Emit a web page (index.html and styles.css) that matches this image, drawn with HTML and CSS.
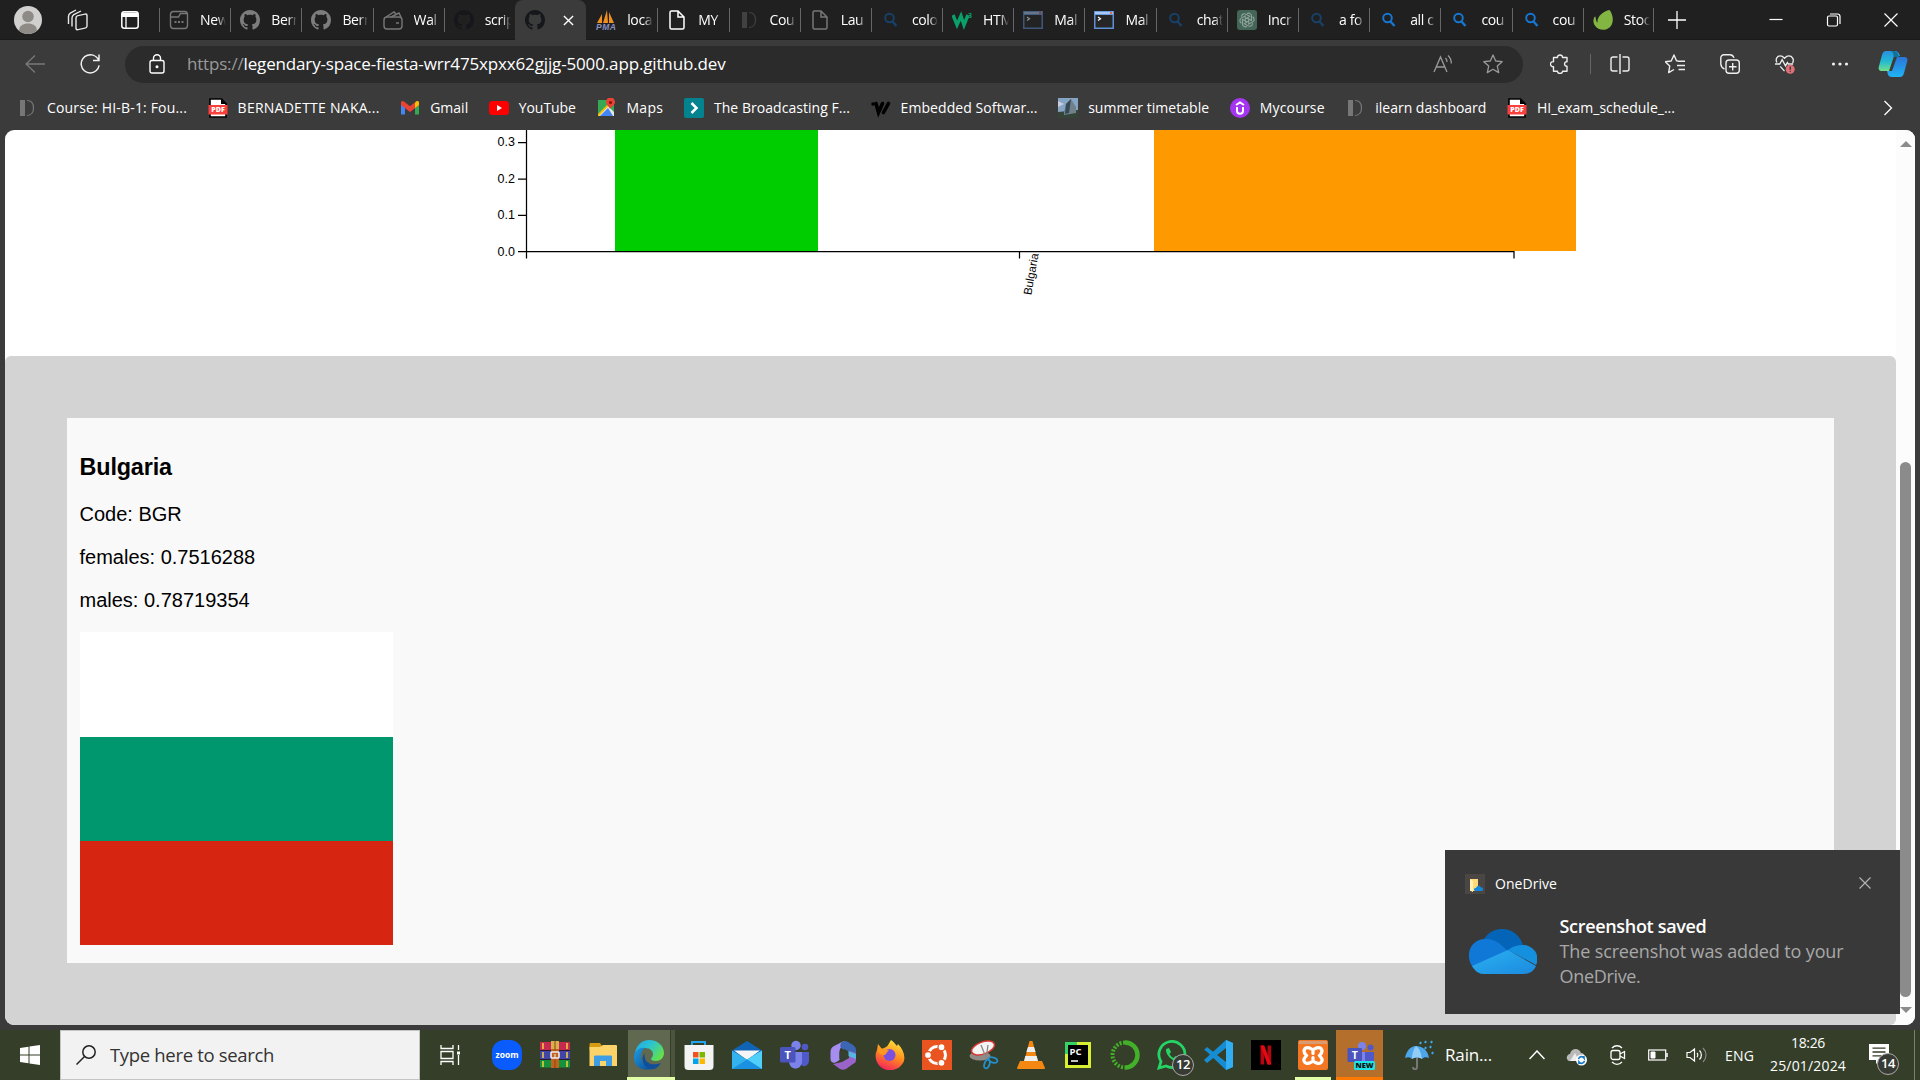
FILE: index.html
```html
<!DOCTYPE html>
<html lang="en">
<head>
<meta charset="utf-8">
<title>Desktop</title>
<link rel="stylesheet" href="styles.css">
</head>
<body>
<svg class="defs" aria-hidden="true">
  <defs>
    <linearGradient id="edgeA" x1="0" y1="0" x2="1" y2=".6"><stop offset="0" stop-color="#1fa5e8"/><stop offset=".5" stop-color="#2bc4d0"/><stop offset="1" stop-color="#63e04b"/></linearGradient>
    <linearGradient id="edgeB" x1="0" y1="0" x2="1" y2="1"><stop offset="0" stop-color="#1b9de2"/><stop offset="1" stop-color="#0c4a95"/></linearGradient>
    <linearGradient id="copA" x1="0" y1="0" x2="0" y2="1"><stop offset="0" stop-color="#2a8fe0"/><stop offset=".5" stop-color="#21b8d4"/><stop offset="1" stop-color="#72e08a"/></linearGradient>
    <linearGradient id="copB" x1="0" y1="0" x2="0" y2="1"><stop offset="0" stop-color="#2b74d8"/><stop offset="1" stop-color="#20b4f5"/></linearGradient>
    <linearGradient id="fire" x1=".7" y1="0" x2=".3" y2="1"><stop offset="0" stop-color="#ffe83a"/><stop offset=".5" stop-color="#ff8a1e"/><stop offset="1" stop-color="#f5205e"/></linearGradient>
    <linearGradient id="odFront" x1="0" y1="0" x2="1" y2="1"><stop offset="0" stop-color="#2bb1f0"/><stop offset="1" stop-color="#1b8ae0"/></linearGradient>
  </defs>
  <symbol id="github" viewBox="0 0 16 16"><path d="M8 0C3.58 0 0 3.58 0 8c0 3.54 2.29 6.53 5.47 7.59.4.07.55-.17.55-.38 0-.19-.01-.82-.01-1.49-2.01.37-2.53-.49-2.69-.94-.09-.23-.48-.94-.82-1.13-.28-.15-.68-.52-.01-.53.63-.01 1.08.58 1.23.82.72 1.21 1.87.87 2.33.66.07-.52.28-.87.51-1.07-1.78-.2-3.64-.89-3.64-3.95 0-.87.31-1.59.82-2.15-.08-.2-.36-1.02.08-2.12 0 0 .67-.21 2.2.82.64-.18 1.32-.27 2-.27.68 0 1.36.09 2 .27 1.53-1.04 2.2-.82 2.2-.82.44 1.1.16 1.92.08 2.12.51.56.82 1.27.82 2.15 0 3.07-1.87 3.75-3.65 3.95.29.25.54.73.54 1.48 0 1.07-.01 1.93-.01 2.2 0 .21.15.46.55.38A8.013 8.013 0 0016 8c0-4.42-3.58-8-8-8z" fill="currentColor"/></symbol>
  <symbol id="find" viewBox="0 0 20 20"><circle cx="8.5" cy="8" r="4.3" fill="none" stroke="currentColor" stroke-width="2"/><path d="M11.5 11.5l4 4.5" stroke="currentColor" stroke-width="2.4"/></symbol>
  <symbol id="page" viewBox="0 0 20 20"><path d="M3 2.5C3 1.500 3.500 1 4.500 1H11l6 6v10.500c0 1-.5 1.500-1.500 1.500h-11C3.500 19 3 18.500 3 17.500zM11 1v6h6" fill="none" stroke="currentColor" stroke-width="1.500"/></symbol>
  <symbol id="ilearn" viewBox="0 0 20 20"><path d="M3 2h5v16H3z" fill="currentColor"/><path d="M10 2.500c4.500 0 6.500 3.500 6.500 7.500s-2 7.500-6.500 7.500" fill="none" stroke="currentColor" stroke-width="1.200"/></symbol>
  <symbol id="term" viewBox="0 0 20 20"><path d="M0 1h20v18H0z" fill="#5f8fd8"/><path d="M1.500 5h17v12.500h-17z" fill="#262626"/><path d="M1 1.800h18v2.400H1z" fill="#a9c9f5"/><path d="M16 2.200h2.200v1.600H16z" fill="#e8532e"/><path d="M4 7l2.500 1.800L4 10.500" fill="none" stroke="#fff" stroke-width="1.200"/></symbol>
  <symbol id="pdf" viewBox="0 0 20 20"><path d="M2 1h11.500L18 5.500V19H2z" fill="#fff" stroke="#000" stroke-width="1.600"/><path d="M13 1v5h5z"/><path d="M.5 7h19v9.500H.5z" fill="#f9403c"/><text x="10" y="14.300" text-anchor="middle" font-family="Open Sans" font-weight="800" font-size="7" fill="#fff">PDF</text></symbol>
</svg>

<header class="tabstrip">
  <div class="tab-tools">
    <svg class="avatar" viewBox="0 0 28 28"><circle cx="14" cy="14" r="14" fill="#d2d0ce"/><circle cx="14" cy="10.500" r="5.800" fill="#8e8b87"/><path d="M5 24.500c.5-5 4-7 9-7s8.500 2 9 7c-5 4.500-13 4.500-18 0z" fill="#8e8b87"/></svg>
    <svg class="i22" viewBox="0 0 22 22" fill="none" stroke="#e8e8e8" stroke-width="1.400"><path d="M1.500 15V7.500c0-1.500.5-2.500 1.800-3.300L9 1M5 17.500V9c0-1.500.5-2.500 1.800-3.300L14 2"/><rect x="9" y="6" width="11" height="14" rx="2" transform="skewY(-12) translate(0 3)"/></svg>
    <svg class="i18" viewBox="0 0 18 18"><rect x=".8" y=".8" width="16.400" height="16.400" rx="2.500" fill="none" stroke="#fff" stroke-width="1.500"/><path d="M1 1.500h16V6H1z" fill="#fff"/><path d="M5 5v12" stroke="#fff" stroke-width="1.300"/></svg>
  </div>
  <nav class="tabs">
    <div class="tab"><svg viewBox="0 0 20 20" fill="none" stroke="#777" stroke-width="1.400"><rect x="1.500" y="1.500" width="17" height="17" rx="3"/><path d="M1.500 7h8l2-3.500h7" /><path d="M5.500 12h2m1.500 0h2m1.500 0h2" stroke-width="2"/></svg><span>New</span></div>
    <div class="tab gh"><svg><use href="#github"/></svg><span>Bern</span></div>
    <div class="tab gh"><svg><use href="#github"/></svg><span>Bern</span></div>
    <div class="tab"><svg viewBox="0 0 20 20" fill="none" stroke="#777" stroke-width="1.400"><rect x="1" y="7" width="18" height="12" rx="3"/><path d="M3 7l8-5 2 2M8 7l8-4 2 4M13 13h3"/></svg><span>Wal</span></div>
    <div class="tab gh-dark"><svg><use href="#github"/></svg><span>scrip</span></div>
    <div class="tab active gh-dark"><svg><use href="#github"/></svg><svg class="close" viewBox="0 0 12 12"><path d="M1 1l10 10M11 1L1 11" stroke="#fff" stroke-width="1.500"/></svg></div>
    <div class="tab"><svg viewBox="0 0 20 20"><path d="M1 13L6 4v9zM7 13l4-13 1 13zM13 13V2l5 11z" fill="#f09020"/><text x="0" y="19.500" font-family="Liberation Sans" font-weight="700" font-style="italic" font-size="8.500" textLength="20" fill="#8a90c0">PMA</text></svg><span>loca</span></div>
    <div class="tab pg-on"><svg><use href="#page"/></svg><span>MY</span></div>
    <div class="tab il"><svg><use href="#ilearn"/></svg><span>Cou</span></div>
    <div class="tab pg"><svg><use href="#page"/></svg><span>Lau</span></div>
    <div class="tab sr-dim"><svg><use href="#find"/></svg><span>colo</span></div>
    <div class="tab"><svg viewBox="0 0 20 20"><path d="M1 5l4 10 4-9 3 9 4-10" fill="none" stroke="#0aa06a" stroke-width="3.400"/><text x="16" y="8" font-family="Open Sans" font-weight="700" font-size="7" fill="#0aa06a">3</text></svg><span>HTM</span></div>
    <div class="tab dim"><svg><use href="#term"/></svg><span>Mal</span></div>
    <div class="tab"><svg><use href="#term"/></svg><span>Mal</span></div>
    <div class="tab sr-dim"><svg><use href="#find"/></svg><span>chat</span></div>
    <div class="tab"><svg viewBox="0 0 20 20"><rect width="20" height="20" rx="3" fill="#446659"/><g fill="none" stroke="#92a59d" stroke-width="1.100"><path id="petal" d="M10 3.500c2.500-1 4.500.5 4.500 2.500v4.500L10 8"/><use href="#petal" transform="rotate(60 10 10)"/><use href="#petal" transform="rotate(120 10 10)"/><use href="#petal" transform="rotate(180 10 10)"/><use href="#petal" transform="rotate(240 10 10)"/><use href="#petal" transform="rotate(300 10 10)"/></g></svg><span>Incr</span></div>
    <div class="tab sr-dim"><svg><use href="#find"/></svg><span>a fo</span></div>
    <div class="tab sr"><svg><use href="#find"/></svg><span>all c</span></div>
    <div class="tab sr"><svg><use href="#find"/></svg><span>cou</span></div>
    <div class="tab sr"><svg><use href="#find"/></svg><span>cou</span></div>
    <div class="tab"><svg viewBox="0 0 20 20"><path d="M16.500 0C19 3 21 9 19 14c-2 5-8 7-13 5C1 17-1 11 1.500 7l1-.5C3 10 3 11 4.500 13 3.500 7 10 1 16.500 0z" fill="#82b541"/></svg><span>Stoc</span></div>
  </nav>
  <div class="window-tools">
    <svg viewBox="0 0 18 18"><path d="M9 0v18M0 9h18" stroke="#fff" stroke-width="1.300"/></svg>
    <svg viewBox="0 0 18 18"><path d="M2.500 8.500h13" stroke="#fff" stroke-width="1.200"/></svg>
    <svg viewBox="0 0 18 18" fill="none" stroke="#fff" stroke-width="1.200"><rect x="2.500" y="5" width="10" height="10" rx="1.500"/><path d="M5 3h7.500c1.500 0 2.500 1 2.500 2.500V13"/></svg>
    <svg viewBox="0 0 18 18"><path d="M2.500 2.500l13 13M15.500 2.500l-13 13" stroke="#fff" stroke-width="1.200"/></svg>
  </div>
</header>

<div class="toolbar">
  <svg class="back" viewBox="0 0 20 20" fill="none" stroke="#797979" stroke-width="1.300"><path d="M20 10H1M10 1.500L1 10l9 8.500"/></svg>
  <svg class="reload" viewBox="0 0 20 20" fill="none" stroke="#f0f0f0" stroke-width="1.500"><path d="M18.500 5.500C16 1.500 11.500 0 7.500 1.300a9 9 0 1 0 11.600 10M19 .5v6h-6"/></svg>
  <div class="address">
    <svg class="lock" viewBox="0 0 16 20" fill="none" stroke="#fff" stroke-width="1.400"><rect x="1" y="6.500" width="14" height="12.500" rx="2"/><path d="M4.500 6.500V4.300a3.500 3.500 0 0 1 7 0v2.200"/><circle cx="8" cy="12.700" r=".8" fill="#fff"/></svg>
    <span class="url"><span class="scheme" data-w="56.500">https://</span><span data-w="482">legendary-space-fiesta-wrr475xpxx62gjjg-5000.app.github.dev</span></span>
    <svg class="read" viewBox="0 0 20 20" fill="none" stroke="#9a9a9a" stroke-width="1.300"><path d="M1 18L7.500 3 14 18M3.500 13h8M12.500 4c1 1 1.500 2.500 1.500 4M15 1.500c2.300 2 3.300 4.500 3.300 8"/></svg>
    <svg class="star" viewBox="0 0 20 20" fill="none" stroke="#9a9a9a" stroke-width="1.300" stroke-linejoin="round"><path d="M10 1l2.700 6 6.500.7-4.900 4.400 1.400 6.500L10 15.300l-5.700 3.300 1.400-6.500L.8 7.700l6.500-.7z"/></svg>
  </div>
  <div class="actions">
    <svg viewBox="0 0 20 20" fill="none" stroke="#eee" stroke-width="1.400" stroke-linejoin="round"><path d="M3.500 3.500h4c-.5-3.300 5.500-3.300 5 0h4.500v4.300c-3-.6-3.500 4.700 0 4.400v5h-4.500c.3 3-5.300 3-5 0h-4v-4.500c-4 .3-4-5.500 0-5z"/></svg>
    <i class="sep"></i>
    <svg viewBox="0 0 20 20" fill="none" stroke="#eee" stroke-width="1.400"><path d="M7.500 3H3C1.800 3 1 3.800 1 5v10c0 1.200.8 2 2 2h4.500M12.500 3H17c1.200 0 2 .8 2 2v10c0 1.200-.8 2-2 2h-4.500M10 0v20"/></svg>
    <svg viewBox="0 0 20 20" fill="none" stroke="#eee" stroke-width="1.400" stroke-linejoin="round"><path d="M13 7l-1.500-.2L9 1 6.200 7l-6 .8 4.500 4.300-1 6.500L9 15.500M13 7.300h7M12 11.500h8M13.500 15.500H20"/></svg>
    <svg viewBox="0 0 20 20" fill="none" stroke="#eee" stroke-width="1.400"><path d="M4.500 15C2 14 1 12 .8 10V4C.8 2 2 .8 4 .8h6c2 0 3.200 1 4 3"/><rect x="6" y="6" width="13.300" height="13.300" rx="3"/><path d="M12.700 9v7.500M9 12.700h7.500"/></svg>
    <svg viewBox="0 0 21 21" fill="none" stroke="#eee" stroke-width="1.400"><path d="M10 18l-4.500-5M2 9C0 5 2.500 2 5.500 2 8 2 9.500 4 10 4.500 10.500 4 12 2 14.500 2c3.500 0 6 3.500 4 7.500M0 10.500h5L7.500 6 11 12.500l2-3.500 1 1.500h5"/><circle cx="16" cy="16" r="4.700" fill="#e07078" stroke="none"/><path d="M16 13v3.500m0 1v1.200" stroke="#333"/></svg>
    <svg viewBox="0 0 20 20" fill="#eee"><circle cx="3.500" cy="10" r="1.600"/><circle cx="10" cy="10" r="1.600"/><circle cx="16.500" cy="10" r="1.600"/></svg>
    <svg class="copilot" viewBox="0 0 30 28"><path d="M8 1h8c4 0 5 2 6 5h-6l-5 15H4c-3 0-4-2-3-5L4 5c.7-2.500 2-4 4-4z" fill="url(#copA)"/><path d="M22 27h-8c-4 0-4-3-5-6h5l5-14h7c3 0 4 2 3 5l-3 11c-.7 2.500-2 4-4 4z" fill="url(#copB)"/><path d="M15 1c4 0 5 2 6 6h-5c-1-3 0-4-3-6z" fill="#117298"/></svg>
  </div>
</div>

<nav class="bookmarks">
  <a class="il2"><svg><use href="#ilearn"/></svg><span data-w="140">Course: HI-B-1: Fou...</span></a>
  <a><svg><use href="#pdf"/></svg><span data-w="142">BERNADETTE NAKA...</span></a>
  <a><svg viewBox="0 0 20 20"><path d="M1 4v12.500h4V7.500z" fill="#4285f4"/><path d="M19 4v12.500h-4V7.500z" fill="#34a853"/><path d="M1 4.500C1 3 3 2.500 4 3.500l6 4.800 6-4.800c1-1 3-.5 3 1V7l-9 7-9-7z" fill="#ea4335"/><path d="M15 5v5l4-3V4.500c0-1.500-2-2-3-1z" fill="#fbbc04"/></svg><span data-w="38">Gmail</span></a>
  <a><svg viewBox="0 0 20 20"><rect y="3" width="20" height="14" rx="3.500" fill="red"/><path d="M8 7l5 3-5 3z" fill="#fff"/></svg><span data-w="57">YouTube</span></a>
  <a><svg viewBox="0 0 20 20"><path d="M2 2h16v16H2z" fill="#34a853"/><path d="M2 18L12 8l6 6v4z" fill="#e8e8e8"/><path d="M4 18l8-8 5 8z" fill="#4285f4"/><path d="M2 16L16 2h2L3 18H2z" fill="#fbbc04"/><path d="M14 11c-1-3-4-4-4-7a4.500 4.500 0 0 1 9 0c0 3-3 4-5 7z" fill="#ea4335"/><circle cx="14.500" cy="4.500" r="1.600" fill="#811"/></svg><span data-w="37">Maps</span></a>
  <a><svg viewBox="0 0 20 20"><rect width="20" height="20" rx="2" fill="#03838f"/><path d="M7.500 5l5 5-5 5" fill="none" stroke="#fff" stroke-width="2.500"/></svg><span data-w="136">The Broadcasting F...</span></a>
  <a><svg viewBox="0 0 20 20"><circle cx="2" cy="6" r="1.800"/><path d="M5 5.500l2.500 9L11.500 5.500M12.500 14.500L17.500 5.500" fill="none" stroke="#000" stroke-width="3.600" stroke-linecap="round"/></svg><span data-w="137">Embedded Softwar...</span></a>
  <a><svg viewBox="0 0 20 20"><path d="M0 0h20v20H0z" fill="#86a5c4"/><path d="M0 14l20-2v8H0z" fill="#354438"/><path d="M6 14l2-8 5-5 5 8v6L6 17z" fill="#70818a"/><path d="M8 6l5-5-2 14-4 1z" fill="#354856"/><path d="M0 3l6 3-6 3z" fill="#ccd"/></svg><span data-w="121">summer timetable</span></a>
  <a><svg viewBox="0 0 20 20"><circle cx="10" cy="10" r="10" fill="#a435f0"/><path d="M6 7l4-2.500L14 7M7 9v4c0 3.500 6 3.500 6 0V9" fill="none" stroke="#fff" stroke-width="2"/></svg><span data-w="65">Mycourse</span></a>
  <a class="il2"><svg><use href="#ilearn"/></svg><span data-w="111">ilearn dashboard</span></a>
  <a><svg><use href="#pdf"/></svg><span data-w="138">HI_exam_schedule_...</span></a>
  <svg class="more" viewBox="0 0 10 16"><path d="M1.500 1l7 7-7 7" fill="none" stroke="#fff" stroke-width="1.300"/></svg>
</nav>

<div class="viewport">
  <main class="content">
    <svg class="chart" width="1891" height="226" viewBox="5 130 1891 226">
      <path d="M615 130h203v121H615z" fill="#00cd00"/>
      <path d="M1154 130h422v121h-422z" fill="#ff9900"/>
      <path d="M526.500 130v128.500M518 251.500h996v7M1019.500 251.500v7M518 142.500h8M518 179h8M518 215.300h8" fill="none" stroke="#000" stroke-width="1.250"/>
      <g class="ticks" text-anchor="end"><text x="515" y="146">0.3</text><text x="515" y="182.500">0.2</text><text x="515" y="219">0.1</text><text x="515" y="255.500">0.0</text></g>
      <text class="country" text-anchor="end" transform="translate(1038.500 254) rotate(-80)">Bulgaria</text>
    </svg>
    <section class="panel">
      <article class="card">
        <h3>Bulgaria</h3>
        <p>Code: BGR</p>
        <p>females: 0.7516288</p>
        <p>males: 0.78719354</p>
        <div class="flag"><i class="white"></i><i class="green"></i><i class="red"></i></div>
      </article>
    </section>
  </main>
  <div class="scrollbar"><i class="up"></i><i class="thumb"></i><i class="down"></i></div>
</div>

<aside class="toast">
  <div class="toast-head">
    <svg viewBox="0 0 20 20"><path d="M0 0h20v20H0z" fill="#4a4644"/><path d="M5 5h8v12H5z" fill="#ffd978"/><path d="M5 5l3 2v11l-3-1.500z" fill="#fff0b8"/><path d="M10 17c-2-1.500-.5-3.500 1-3 1-3 4-3 5-.5 2-.3 3 2 1 3.500z" fill="#1287dc"/></svg>
    <span data-w="62">OneDrive</span>
    <svg class="toast-close" viewBox="0 0 12 12"><path d="M.5 .5l11 11M11.500 .5l-11 11" stroke="#b5b5b5" stroke-width="1.100"/></svg>
  </div>
  <div class="toast-body">
    <svg viewBox="0 0 69 45"><path d="M16 10C21 2 29 0 34 0c11 0 18 7 21 16L40 28z" fill="#0364b8"/><path d="M4 37C-3 26 2 10 18 10c6 0 9 2 13 4l22 20-15 11H16C11 45 7 42 4 37z" fill="#1079d8"/><path d="M40 21c5-4 10-5 15-5 9 0 18 9 13 20z" fill="#1490df"/><path d="M4 37l36-16 28 16c-2 5-7 8-12 8H16C11 45 7 42 4 37z" fill="url(#odFront)"/></svg>
    <div class="message"><b><span data-w="147">Screenshot saved</span></b><p><span data-w="284">The screenshot was added to your</span><br><span data-w="81">OneDrive.</span></p></div>
  </div>
</aside>

<footer class="taskbar">
  <div class="start"><svg viewBox="0 0 20 20" fill="#fff"><path d="M0 3l8.500-1.300v7.800H0zM9.500 1.500L20 0v9.500H9.500zM0 10.500h8.500v7.800L0 17zM9.500 10.500H20V20L9.500 18.500z"/></svg></div>
  <div class="search"><svg viewBox="0 0 20 20" fill="none" stroke="#222" stroke-width="1.500"><circle cx="13" cy="7" r="6.200"/><path d="M8.500 11.500L.5 19.500"/></svg><span data-w="164">Type here to search</span></div>
  <div class="taskview"><svg viewBox="0 0 20 20" fill="none" stroke="#fff" stroke-width="1.300"><path d="M1 0v3.500h12V0M1 20v-3.500h12V20M1 6.500h12v7H1zM18.500 0v5M18.500 10v10"/><path d="M18.500 6.500v3" stroke-width="3"/></svg></div>
  <div class="apps">
    <div><svg viewBox="0 0 30 30"><rect width="30" height="30" rx="12" fill="#0b5cff"/><text x="15" y="17.500" text-anchor="middle" font-family="Open Sans" font-weight="700" font-size="8.500" fill="#fff">zoom</text></svg></div>
    <div><svg viewBox="0 0 30 30"><rect y="2" width="30" height="8" fill="#c52a50"/><rect y="11" width="30" height="8" fill="#4245a5"/><rect y="20" width="30" height="7.500" fill="#15923c"/><path d="M0 10h30v1H0zM0 19h30v1H0z" fill="#281830"/><path d="M3 3v6M3 12v6M3 21v6M27 3v6M27 12v6M27 21v6" stroke="#f4d03b" stroke-width="1.500"/><path d="M11 1h8v27h-8z" fill="#c06420"/><path d="M11 1h8v8h-8z" fill="#d9b14a"/><path d="M15 1v10M15 19v9" stroke="#8a4514"/><rect x="11" y="12" width="8" height="6" rx="1" fill="none" stroke="#eee" stroke-width="1.600"/><path d="M15 14v4" stroke="#eee"/></svg></div>
    <div><svg viewBox="0 0 30 30"><path d="M1.500 4c0-1 1-1 1-1H12l2 3v4H1.500z" fill="#d99a13"/><path d="M1.500 7H12l3-2h13c1 0 1 1 1 1v20H1.500z" fill="#fcd368"/><path d="M6 26V17c0-1 .5-1.500 1.500-1.500h15c1 0 1.500.5 1.500 1.500v9h-6v-5h-6v5z" fill="#3d9de5"/></svg></div>
    <div class="running"><svg viewBox="0 0 30 30"><path d="M1 14C2 5 8 0 15 0c9 0 15 6 15 13 0 5-4 8-8 8-3 0-5-1-5-2s2-2 2-5-3-6-8-6c-5 0-8 2-10 6z" fill="url(#edgeA)"/><path d="M0 16C1 10 6 7 11 8c-3 2-4 5-4 8 0 7 5 12 12 12-7 4-20 1-19-12z" fill="url(#edgeB)"/><path d="M11 13c-2 8 5 14 16 10-4 7-10 8-15 4C8 23 7 17 11 13z" fill="#124f9b"/></svg></div>
    <div><svg viewBox="0 0 30 30"><path d="M8 6V2h13v4" fill="none" stroke="#22a4ec" stroke-width="2"/><path d="M.5 5h29v21c0 3-1.500 4-4 4h-21c-2.500 0-4-1-4-4z" fill="#f3f3f3"/><path d="M9 12h5.500v5.500H9z" fill="#f05023"/><path d="M15.500 12H21v5.500h-5.500z" fill="#7db800"/><path d="M9 18.500h5.500V24H9z" fill="#00a3ee"/><path d="M15.500 18.500H21V24h-5.500z" fill="#ffb800"/></svg></div>
    <div><svg viewBox="0 0 30 30"><path d="M0 10.500L15 1l15 9.500V16H0z" fill="#1064b5"/><path d="M2 10.500h26L15 20z" fill="#f5f5f5"/><path d="M0 10.500l15 9 15-9V29H0z" fill="#33b3ee"/><path d="M15 19.500l15-9V29z" fill="#50d0f8"/><path d="M0 29l15-9.500L30 29z" fill="#1b91e2"/></svg></div>
    <div><svg viewBox="0 0 30 30"><circle cx="16" cy="5.500" r="4.700" fill="#7b83eb"/><circle cx="25" cy="7" r="3.300" fill="#5059c9"/><path d="M19 12h10v8c0 7-7 8-9 3z" fill="#5059c9"/><path d="M9 12h13v9c0 10-13 10-13 0z" fill="#7b83eb"/><rect x="0" y="7" width="15.500" height="15.500" rx="1.500" fill="#4b53bc"/><text x="7.700" y="18.700" text-anchor="middle" font-family="Open Sans" font-weight="700" font-size="11" fill="#fff">T</text></svg></div>
    <div><svg viewBox="0 0 30 30"><path d="M16 1L6 6C4 7 2.500 9 2.500 12v7c0 3 3 5 6 3l3-2v-8c0-5 4-6 4.500-11z" fill="#a68df0"/><path d="M14 2c3-1.500 4-1 6 0l5 3c2 1.500 3 3 3 5v7l-7-4-8-5c-1-2-1-4 1-6z" fill="#3c65b4"/><path d="M28 13v7c0 2-1 3-3 4l-7 5c-2 1-4 1-6 0l-7-5 9-2 7-4v-7z" fill="#9a63c9"/><path d="M20 11l8 3v5l-8-3z" fill="#54b6e2"/><path d="M11.500 12l5-3 4 2.500V17l-5 3.500-4-2z" fill="#35402e"/></svg></div>
    <div><svg viewBox="0 0 30 30"><path d="M2 10l1-6 4 5 4-2c2-1 3-4 5-7 3 2 4 4 6 6l1-2c6 6 8 14 5 19-5 9-19 10-25 1-3-5-3-10-1-14z" fill="url(#fire)"/><circle cx="14.500" cy="15" r="6" fill="#7950e0"/><path d="M3 9c6-2 8 2 11 1l-4 5c-4 0-7-2-7-6z" fill="#ff981e"/></svg></div>
    <div><svg viewBox="0 0 30 30"><path d="M0 0h30v30H0z" fill="#e95420"/><circle cx="15" cy="15" r="8.500" fill="none" stroke="#fff" stroke-width="3"/><g fill="#fff" stroke="#e95420" stroke-width="1.300"><circle cx="6" cy="15" r="3.500"/><circle cx="19.500" cy="7.200" r="3.500"/><circle cx="19.500" cy="22.800" r="3.500"/></g></svg></div>
    <div><svg viewBox="0 0 30 30"><ellipse cx="11" cy="16" rx="10.500" ry="4.500" fill="#918b88"/><ellipse cx="14" cy="8" rx="12" ry="6" transform="rotate(-20 14 8)" fill="#f4f4f4" stroke="#d93732" stroke-width="1.500"/><path d="M12 5l6 15M19 5l-2 14" stroke="#888" stroke-width="1.300"/><g fill="none" stroke="#238fca" stroke-width="1.800"><ellipse cx="18" cy="24" rx="2.500" ry="4.500" transform="rotate(20 18 24)"/><ellipse cx="24" cy="20" rx="4.500" ry="2.500" transform="rotate(20 24 20)"/></g></svg></div>
    <div><svg viewBox="0 0 30 30"><path d="M4 21h22l3 7c0 1-1 1-1 1H2c-1 0-1-1-1-1z" fill="#f58713"/><path d="M13.500 1h3L22 22c-2 3-12 3-14 0z" fill="#f58713"/><path d="M12 7h6l1.600 5h-9.200zM9.300 16h11.400l1.300 5H8z" fill="#eee"/></svg></div>
    <div><svg viewBox="0 0 30 30"><path d="M2 2h26v26H2z" fill="#d8ee32"/><path d="M2 2h12v12H2z" fill="#36d366"/><path d="M5 5h20v20H5z"/><text x="6.500" y="14.500" font-family="Open Sans" font-weight="700" font-size="9.500" fill="#fff">PC</text><path d="M8 21h7" stroke="#fff" stroke-width="1.500"/></svg></div>
    <div><svg viewBox="0 0 30 30" fill="none" stroke="#43b02a"><path d="M15 2.500a12.500 12.500 0 1 1 0 25" stroke-width="4.500"/><path d="M15 2.500a12.500 12.500 0 0 0 0 25" stroke-width="4" stroke-dasharray="2 1.500"/></svg></div>
    <div class="badged"><svg viewBox="0 0 30 30"><path d="M2 28l2-6.500A13 13 0 1 1 9 26z" fill="none" stroke="#25d366" stroke-width="2.800"/><path d="M9 9l3-1 2 4-1.500 2c1 2 2.500 3 4 4l2-2 4 2-1 3C17 23 8 15 9 9z" fill="#25d366"/></svg><b class="count">12</b></div>
    <div><svg viewBox="0 0 30 30"><path d="M22 0l7 3v24l-7 3L2 11l-2-1 3-3 19 15V8L3 23l-3-3z" fill="#168dd2"/><path d="M22 0l7 3v24l-7 3z" fill="#32aff2"/></svg></div>
    <div><svg viewBox="0 0 30 30"><path d="M0 0h30v30H0z"/><path d="M9.500 5.500h3.700v19H9.500zM16.500 5.500h3.700v19h-3.700z" fill="#b20710"/><path d="M9.500 5.500h3.700l7 19h-3.700z" fill="#e50914"/></svg></div>
    <div class="open"><svg viewBox="0 0 30 30"><rect width="30" height="30" rx="2" fill="#f37623"/><path d="M1 1h28v3H1z" fill="#d99c72"/><path d="M7 8.500c3.500-3 6 1 8 1s4.500-4 8-1c3 3.500-.5 5.500-1.500 7 1 1.500 4.500 3.500 1.500 7-3.500 3-6-1-8-1s-4.500 4-8 1c-3-3.500.5-5.500 1.500-7-1-1.500-4.500-3.500-1.500-7zM15 10v3.500M15 21v-3.500" fill="none" stroke="#fff" stroke-width="3.200" stroke-linecap="round"/></svg></div>
    <div class="alert"><svg viewBox="0 0 30 30"><circle cx="17" cy="6" r="4" fill="#7b83eb"/><circle cx="25.500" cy="7.500" r="3" fill="#5059c9"/><path d="M19 12h10v11H19z" fill="#5059c9"/><path d="M9 12h11v11H9z" fill="#7b83eb"/><rect x="2.500" y="8" width="14.500" height="14" rx="1" fill="#4b53bc"/><text x="9.700" y="18.800" text-anchor="middle" font-family="Open Sans" font-weight="700" font-size="10.500" fill="#fff">T</text><rect x="9" y="21" width="21" height="9" rx="1.500" fill="#1ee5e5"/><text x="19.500" y="28.300" text-anchor="middle" font-family="Open Sans" font-weight="800" font-size="7.500" fill="#111">NEW</text></svg></div>
  </div>
  <div class="tray">
    <div class="weather"><svg viewBox="0 0 30 30"><path d="M0 18C2 8 8 6 11 6c6 0 12 4 13 12-3-1-5-1-7 1-3-2-7-2-10 0-2-2-4-2-7-1z" fill="#4da6ea"/><path d="M11 6c4 3 5 7 6 13-3-2-7-2-10 0 0-5 1-9 4-13z" fill="#91cdf7"/><path d="M12 18v9c0 3-4 3-4 0" fill="none" stroke="#777" stroke-width="2"/><path d="M15 4l1-2M20 3l1-2M26 3l1-2M20 9l1-2M25 8l1-2M27 14l1-2" stroke="#40a8ee" stroke-width="2"/></svg><span data-w="47">Rain...</span></div>
    <svg class="t-caret" viewBox="0 0 16 10"><path d="M.5 9L8 1l7.500 8" fill="none" stroke="#fff" stroke-width="1.500"/></svg>
    <svg class="t-cloud" viewBox="0 0 22 18"><path d="M3 13C-1 11 1 6 4 6 5 0 13-1 15 5c3 0 5 3 3 6l-4 2z" fill="#b9b9b9"/><path d="M9 5L4 13h9z" fill="#eee"/><circle cx="15.500" cy="12" r="5.500" fill="#fff"/><path d="M12.500 11c1-3 4-3 5.500-1l-.2-2M18.500 13c-1 3-4 3-5.500 1v2" fill="none" stroke="#1479c9" stroke-width="1.700"/></svg>
    <svg class="t-cam" viewBox="0 0 16 20" fill="none" stroke="#fff" stroke-width="1.300"><rect x="1" y="5.500" width="9" height="9" rx="2"/><path d="M10 9l4.500-2.500v7L10 11M2 3c3-3 7-3 10 0M2 17c3 3 7 3 10 0"/></svg>
    <svg class="t-bat" viewBox="0 0 20 12" fill="none" stroke="#fff"><rect x=".7" y="1" width="17" height="10" stroke-width="1.200"/><path d="M3 3h4v6H3z" fill="#fff"/><path d="M19 4v4" stroke-width="1.500"/></svg>
    <svg class="t-vol" viewBox="0 0 22 20" fill="none" stroke="#fff" stroke-width="1.200"><path d="M1 7.500h3L8.500 4v12L4 12.500H1zM11 8c1 1 1 3 0 4M13.500 5.500c2.500 2.500 2.500 6.500 0 9"/><path d="M17 3c4 4 4 10 0 14" stroke="#888"/></svg>
    <span class="lang"><span data-w="29">ENG</span></span>
    <div class="clock"><span data-w="34">18:26</span><span data-w="76">25/01/2024</span></div>
    <div class="notes"><svg viewBox="0 0 20 20"><path d="M0 0h20v16h-9l-4 4v-4H0z" fill="#fff"/><path d="M3.500 4.200h13M3.500 8h13M3.500 11.800h9" stroke="#343d28" stroke-width="1.300"/></svg><b class="count">14</b></div>
    <i class="peek"></i>
  </div>
</footer>
<script src="fit.js"></script>
</body>
</html>
```
FILE: styles.css
```css
* { box-sizing: border-box; }
body { margin: 0; width: 1920px; height: 1080px; overflow: hidden; display: flex; flex-direction: column; background: #3b3b3b; color: #fff; font-family: "Open Sans", "Noto Sans", sans-serif; font-size: 14px; position: relative; }
svg { flex: none; display: block; }
.defs { position: absolute; width: 0; height: 0; }
[data-w] { white-space: nowrap; display: inline-block; }

.tabstrip { height: 40px; flex: none; display: flex; align-items: center; background: #202020; box-shadow: inset 0 -1px #1a1a1a; }
.tab-tools { width: 159px; padding-left: 14px; display: flex; align-items: center; flex: none; }
.avatar { width: 28px; height: 28px; margin-right: 25px; }
.i22 { width: 22px; height: 22px; margin-right: 32px; }
.i18 { width: 18px; height: 18px; }
.tabs { display: flex; flex: none; width: 1495.2px; height: 40px; }
.tab { width: 71.2px; flex: none; display: flex; align-items: center; padding-left: 10px; gap: 11px; background: linear-gradient(#666, #666) left center / 1px 24px no-repeat; }
.tab svg { width: 20px; height: 20px; }
.tab span { width: 26px; overflow: hidden; white-space: nowrap; letter-spacing: -.35px; padding-bottom: 2px; mask-image: linear-gradient(90deg, #000 65%, transparent); }
.tab:last-child { background: linear-gradient(#666, #666) left center / 1px 24px no-repeat, linear-gradient(#666, #666) right center / 1px 24px no-repeat; }
.tab.active { background: #3b3b3b; border-radius: 8px 8px 0 0; gap: 18px; }
.tab.active + .tab { background: none; }
.tab .close { width: 11px; height: 11px; }
.gh svg { color: #7d7d7d; }
.gh-dark svg { color: #15171a; }
.pg-on svg { color: #fff; }
.pg svg { color: #777; }
.il svg { color: #414141; }
.sr-dim svg { color: #174168; }
.sr svg { color: #1676d2; }
.dim svg { opacity: .5; }
.window-tools { display: flex; align-items: center; padding: 0 0 1px 14px; }
.window-tools svg { width: 18px; height: 18px; }
.window-tools svg:nth-child(2) { margin-left: 81px; }
.window-tools svg:nth-child(n+3) { margin-left: 39.5px; }

.toolbar { height: 48px; flex: none; display: flex; align-items: center; padding-left: 25px; }
.back { width: 20px; height: 20px; margin-right: 35px; }
.reload { width: 20px; height: 20px; margin-right: 25px; }
.address { width: 1398px; height: 37px; border-radius: 19px; background: #2b2b2b; display: flex; align-items: center; padding: 0 20px 0 24px; flex: none; }
.lock { width: 16px; height: 20px; margin-right: 22px; }
.url { font-size: 17px; flex: 1; display: flex; padding-bottom: 2px; }
.scheme { color: #9a9a9a; }
.read, .star { width: 20px; height: 20px; }
.read { margin-right: 30px; }
.actions { display: flex; align-items: center; padding-left: 27px; }
.actions svg { width: 20px; height: 20px; margin-right: 35px; }
.actions svg:first-child { margin-right: 20px; }
.sep { width: 1px; height: 20px; background: #666; margin-right: 19px; }
.actions .copilot { width: 30px; height: 28px; margin: 0 0 0 -7px; }

.bookmarks { height: 42px; flex: none; display: flex; align-items: center; gap: 20.6px; padding: 0 27px 2px 17px; }
.bookmarks a { display: flex; align-items: center; gap: 10px; }
.bookmarks a span { padding-bottom: 2px; }
.bookmarks a svg { width: 20px; height: 20px; }
.bookmarks .il2 svg { color: #777; }
.more { width: 10px; height: 16px; margin-left: auto; }

.viewport { width: 1910px; height: 895px; margin: 0 5px; flex: none; display: flex; background: #fff; border-radius: 9px; overflow: hidden; color: #000; font-family: "Liberation Sans", Arial, sans-serif; }
.content { width: 1891px; flex: none; }
.ticks { font-size: 12.5px; }
.country { font-size: 11.5px; }
.panel { height: 669px; padding: 62px; background: #d3d3d3; border-radius: 6px; }
.card { width: 1767px; height: 545px; background: #f9f9f9; padding: 13px 12.5px; font-size: 20px; line-height: 23px; overflow: hidden; }
.card h3 { font-size: 23.4px; line-height: 27px; margin: 23.4px 0 22.1px; letter-spacing: -.15px; }
.card p { margin: 0 0 20px; }
.flag { width: 313px; height: 313px; display: flex; flex-direction: column; }
.flag i { flex: 1; }
.white { background: #fff; }
.green { background: #00966e; }
.red { background: #d62612; }
.scrollbar { width: 19px; flex: none; background: #fcfcfc; display: flex; flex-direction: column; align-items: center; padding: 11px 0 9px; }
.up, .down { border: 6px solid transparent; }
.up { border-top: 0; border-bottom: 6px solid #8b8b8b; }
.down { border-bottom: 0; border-top: 6px solid #8b8b8b; margin-top: 10px; }
.thumb { width: 11px; height: 535px; margin-top: 315px; border-radius: 6px; background: #8b8b8b; }

.toast { position: absolute; left: 1445px; top: 850px; width: 455px; height: 164px; background: #393939; padding: 24px 20px; }
.toast-head { display: flex; align-items: center; height: 20px; gap: 10px; }
.toast-head span { padding-bottom: 2px; }
.toast-head svg { width: 20px; height: 20px; }
.toast-head .toast-close { width: 12px; height: 12px; margin: -3px 9px 0 auto; }
.toast-body { display: flex; align-items: flex-start; padding: 20px 0 0 2.5px; }
.toast-body > svg { width: 69px; height: 45px; margin: 15px 23px 0 0; }
.message { font-size: 18px; line-height: 25px; }
.message b { font-weight: 600; display: block; height: 25px; }
.message p { margin: 0; color: #a8a8a8; }

.taskbar { height: 50px; margin-top: 5px; flex: none; display: flex; background: #353e28; }
.start { width: 60px; padding: 15px 20px; flex: none; }
.start svg { width: 20px; height: 20px; }
.search { width: 360px; flex: none; background: #f2f2f2; border: 1px solid #c4c4c4; color: #333; display: flex; align-items: center; padding-left: 15px; gap: 14px; font-size: 18.5px; }
.search svg { width: 20px; height: 20px; }
.search span { padding-bottom: 2px; }
.taskview { width: 63px; padding: 15px 20px; flex: none; }
.taskview svg { width: 20px; height: 20px; }
.apps { display: flex; flex: none; }
.apps div { width: 47px; height: 50px; display: flex; align-items: center; justify-content: center; position: relative; }
.apps div:nth-child(-n+7) { width: 48px; }
.apps svg { width: 30px; height: 30px; }
.apps .running { background: linear-gradient(#e2ffa8, #e2ffa8) bottom / 100% 3px no-repeat, linear-gradient(90deg, #353e28 1px, #60694f 1px 43px, #353e28 43px 44px, #4b543c 44px); padding-right: 5px; }
.apps .open { background: linear-gradient(#e2ffa8, #e2ffa8) center bottom / 36px 3px no-repeat; }
.apps .alert { background: linear-gradient(#ff7800, #ff7800) bottom / 100% 3px no-repeat, #b56f2d; }
.count { position: absolute; width: 22px; height: 22px; border: 1px solid #aaa; border-radius: 50%; background: #373b33; font-size: 13px; font-weight: 600; line-height: 19px; text-align: center; letter-spacing: -.5px; }
.badged .count { left: 24px; top: 24px; }
.tray { flex: 1; display: flex; align-items: center; padding-left: 22px; }
.weather { display: flex; align-items: center; gap: 10px; font-size: 17px; width: 124px; flex: none; }
.weather span { padding-bottom: 1px; }
.weather svg { width: 30px; height: 30px; }
.t-caret { width: 16px; height: 10px; margin-right: 21px; }
.t-cloud { width: 22px; height: 18px; margin: 3px 22px 0 0; }
.t-cam { width: 16px; height: 20px; margin-right: 22px; }
.t-bat { width: 20px; height: 12px; margin-right: 18px; }
.t-vol { width: 22px; height: 20px; margin-right: 17px; }
.lang { width: 45px; flex: none; }
.clock { width: 76px; flex: none; display: flex; flex-direction: column; align-items: center; line-height: 23px; margin-bottom: 3px; }
.notes { position: relative; margin: -2px 0 0 23px; }
.notes .count { left: 8px; top: 9px; }
.notes svg { width: 20px; height: 20px; }
.peek { width: 1px; height: 50px; margin: 0 5px 0 auto; background: #7a8070; }
```
FILE: fit.js
```js
document.querySelectorAll('[data-w]').forEach(function (el) {
  var target = parseFloat(el.dataset.w);
  var natural = el.getBoundingClientRect().width;
  el.style.letterSpacing = (target - natural) / el.textContent.length + 'px';
});
```
